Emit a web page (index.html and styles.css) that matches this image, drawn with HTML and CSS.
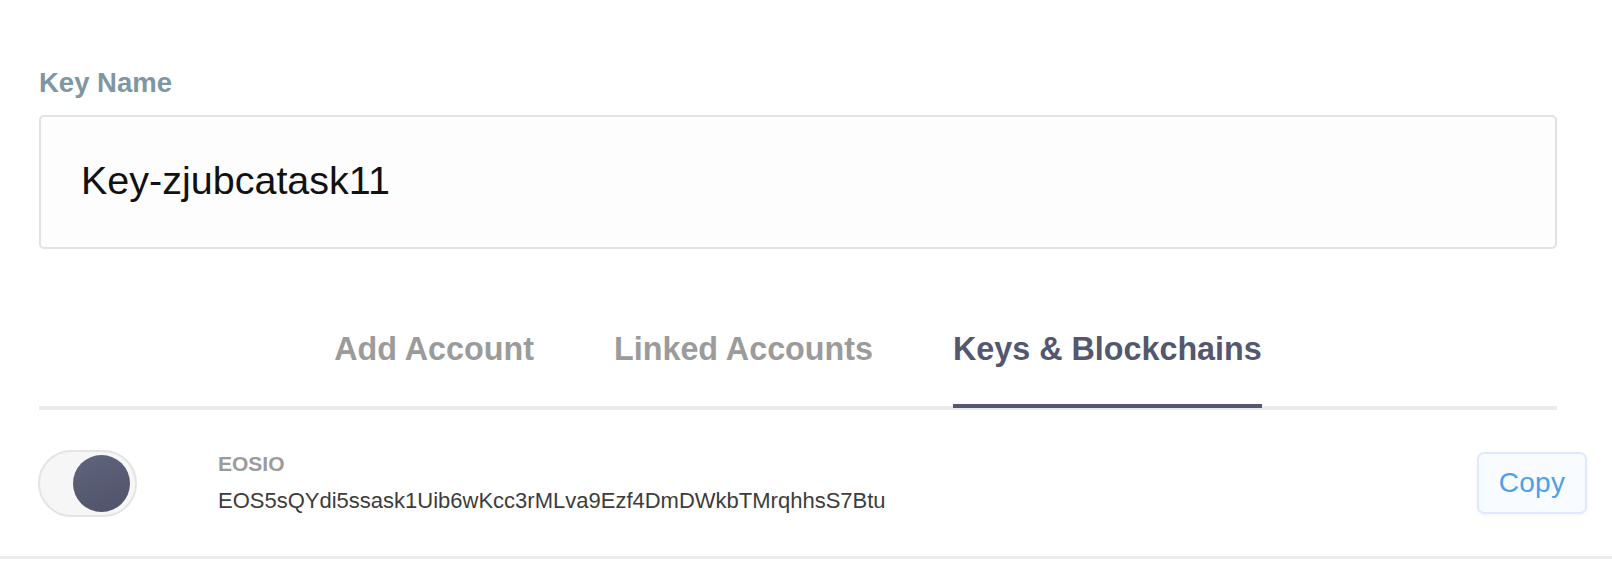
FILE: index.html
```html
<!DOCTYPE html>
<html>
<head>
<meta charset="utf-8">
<link rel="stylesheet" href="styles.css">
</head>
<body>
<div class="top">
  <div class="label">Key Name</div>
  <div class="input">Key-zjubcatask11</div>
  <div class="tabs">
    <div class="tab">Add Account</div>
    <div class="tab">Linked Accounts</div>
    <div class="tab active">Keys &amp; Blockchains</div>
  </div>
</div>
<div class="key-row">
  <div class="toggle"><div class="knob"></div></div>
  <div class="key-info">
    <div class="chain">EOSIO</div>
    <div class="pubkey">EOS5sQYdi5ssask1Uib6wKcc3rMLva9Ezf4DmDWkbTMrqhhsS7Btu</div>
  </div>
  <div class="copy">Copy</div>
</div>
</body>
</html>
```
FILE: styles.css
```css
html, body {
  margin: 0;
  padding: 0;
  background: #ffffff;
  font-family: "Liberation Sans", Arial, sans-serif;
}

.top {
  padding: 67px 55px 0 39px;
}

.label {
  font-size: 27.5px;
  line-height: 32px;
  font-weight: bold;
  color: #7f97a3;
  margin-bottom: 16px;
}

.input {
  box-sizing: border-box;
  height: 134px;
  border: 2px solid #e2e2e2;
  border-radius: 5px;
  background: #fdfdfd;
  padding: 41px 40px 0 40px;
  font-size: 39.5px;
  line-height: 45px;
  color: #111111;
}

.tabs {
  margin-top: 82px;
  display: flex;
  justify-content: center;
  gap: 80px;
  border-bottom: 4px solid #ebebeb;
}

.tab {
  font-size: 32.3px;
  line-height: 36px;
  font-weight: bold;
  color: #9b9b9b;
  padding-bottom: 37px;
}

.tab.active {
  color: #545770;
  border-bottom: 4px solid #545770;
  margin-bottom: -2px;
}

.key-row {
  display: flex;
  align-items: center;
  height: 146px;
  padding: 0 25px 0 38px;
  border-bottom: 3px solid #ececec;
}

.toggle {
  box-sizing: border-box;
  width: 99px;
  height: 67px;
  border: 2px solid #e4e4e4;
  border-radius: 34px;
  background: #f6f6f6;
  display: flex;
  align-items: center;
  justify-content: flex-end;
  padding-right: 5px;
  flex-shrink: 0;
}

.knob {
  width: 57px;
  height: 57px;
  border-radius: 50%;
  background: linear-gradient(160deg, #60647c, #4f5269);
}

.key-info {
  flex: 1;
  margin-left: 81px;
  display: flex;
  flex-direction: column;
}

.chain {
  font-size: 21px;
  line-height: 24px;
  font-weight: bold;
  color: #9b9b9b;
  margin-bottom: 12px;
}

.pubkey {
  font-size: 22px;
  line-height: 26px;
  color: #3c3c3c;
}

.copy {
  box-sizing: border-box;
  width: 110px;
  height: 62px;
  border: 2px solid #dceafa;
  border-radius: 7px;
  background: #f8fbff;
  color: #4da1ea;
  font-size: 28px;
  letter-spacing: 0.3px;
  display: flex;
  align-items: center;
  justify-content: center;
  box-shadow: 0 2px 6px rgba(0, 0, 0, 0.03);
}
```
